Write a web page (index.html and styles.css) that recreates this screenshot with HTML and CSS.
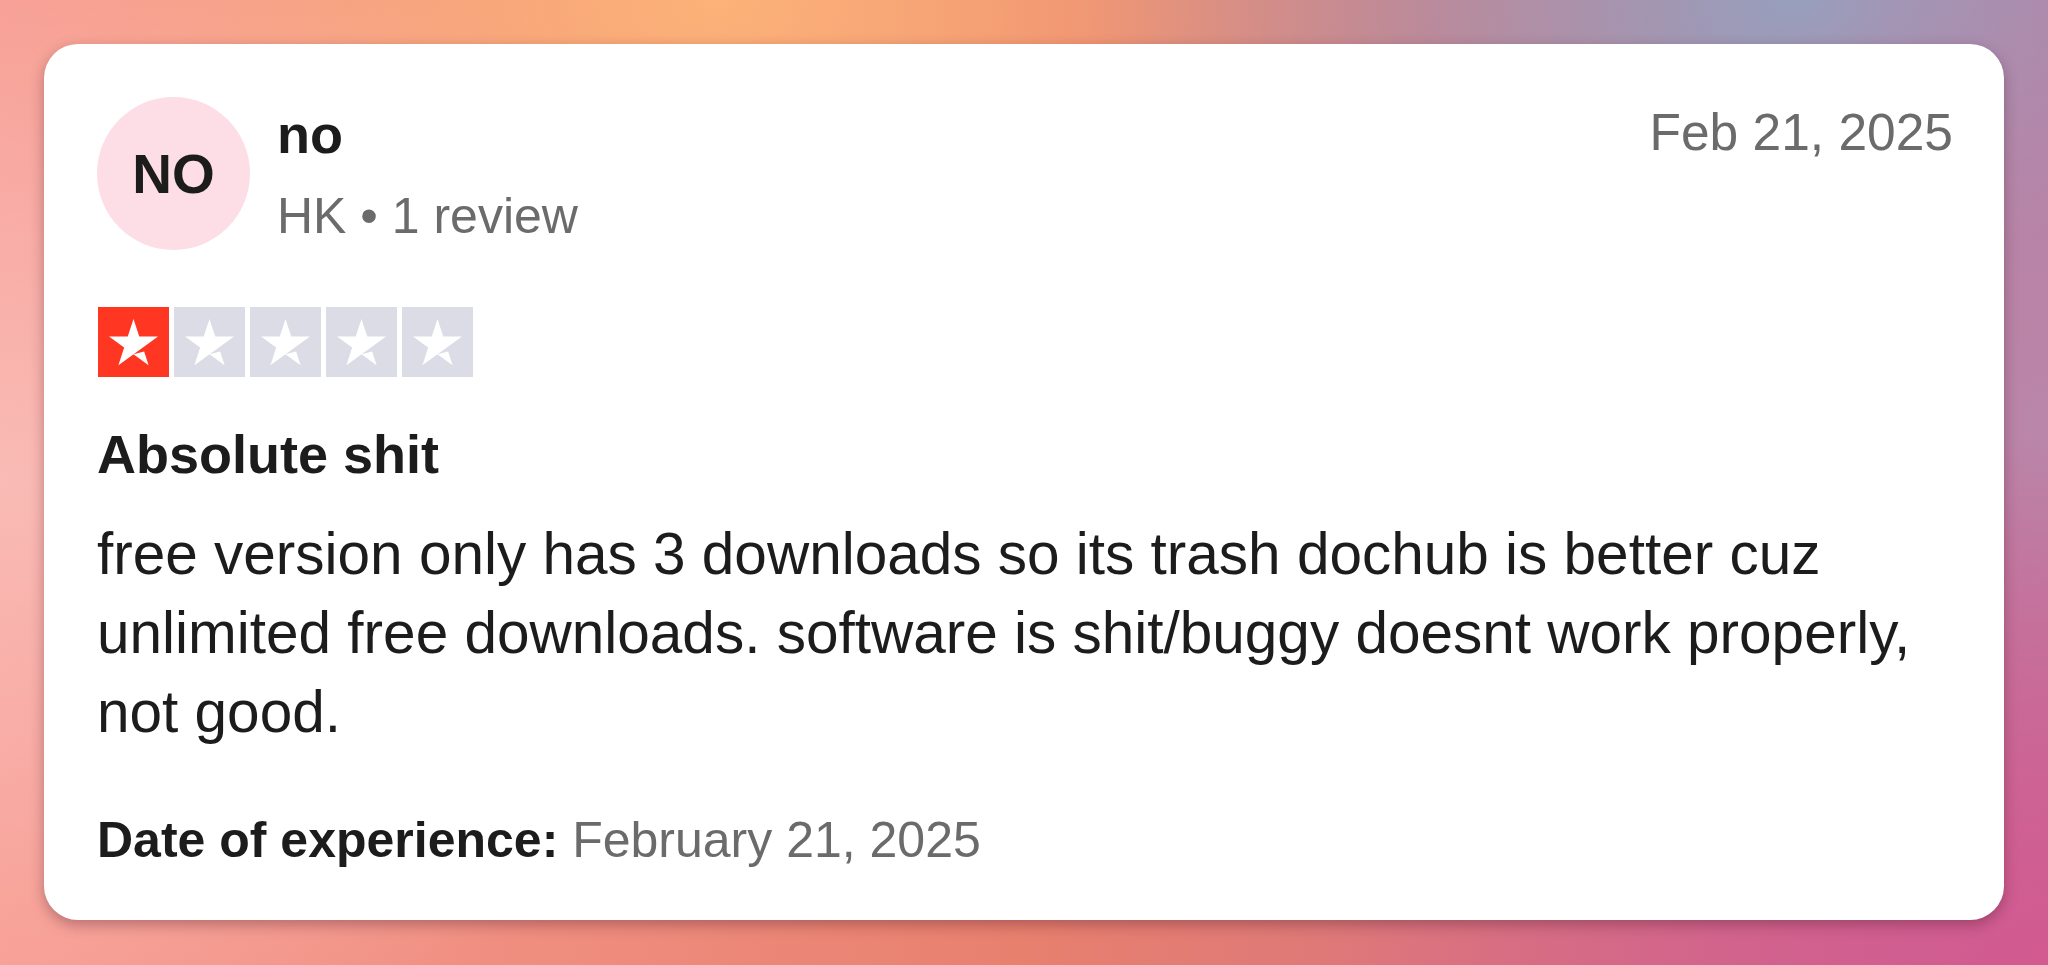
FILE: index.html
```html
<!DOCTYPE html>
<html lang="en">
<head>
    <meta charset="UTF-8">
    <meta name="viewport" content="width=device-width, initial-scale=1.0">
    <title>Review</title>
    <link rel="stylesheet" href="styles.css">
</head>
<body>
    <div class="card">
        <div class="header">
            <div class="avatar">NO</div>
            <div class="user">
                <div class="name">no</div>
                <div class="meta">HK &bull; 1 review</div>
            </div>
            <div class="date">Feb 21, 2025</div>
        </div>

        <div class="stars">
            <div class="star star-on">
                <svg viewBox="0 0 46 46"><path fill="#fff" d="M23 31.077l6.995-1.773 2.923 9.008L23 31.077zm16.1-11.643H26.786L23 7.846l-3.786 11.588H6.9l9.966 7.182-3.785 11.588 9.965-7.182 6.133-4.406L39.1 19.434z"/></svg>
            </div>
            <div class="star">
                <svg viewBox="0 0 46 46"><path fill="#fff" d="M23 31.077l6.995-1.773 2.923 9.008L23 31.077zm16.1-11.643H26.786L23 7.846l-3.786 11.588H6.9l9.966 7.182-3.785 11.588 9.965-7.182 6.133-4.406L39.1 19.434z"/></svg>
            </div>
            <div class="star">
                <svg viewBox="0 0 46 46"><path fill="#fff" d="M23 31.077l6.995-1.773 2.923 9.008L23 31.077zm16.1-11.643H26.786L23 7.846l-3.786 11.588H6.9l9.966 7.182-3.785 11.588 9.965-7.182 6.133-4.406L39.1 19.434z"/></svg>
            </div>
            <div class="star">
                <svg viewBox="0 0 46 46"><path fill="#fff" d="M23 31.077l6.995-1.773 2.923 9.008L23 31.077zm16.1-11.643H26.786L23 7.846l-3.786 11.588H6.9l9.966 7.182-3.785 11.588 9.965-7.182 6.133-4.406L39.1 19.434z"/></svg>
            </div>
            <div class="star">
                <svg viewBox="0 0 46 46"><path fill="#fff" d="M23 31.077l6.995-1.773 2.923 9.008L23 31.077zm16.1-11.643H26.786L23 7.846l-3.786 11.588H6.9l9.966 7.182-3.785 11.588 9.965-7.182 6.133-4.406L39.1 19.434z"/></svg>
            </div>
        </div>

        <h2 class="title">Absolute shit</h2>
        <p class="text">free version only has 3 downloads so its trash dochub is better cuz unlimited free downloads. software is shit/buggy doesnt work properly, not good.</p>

        <p class="experience"><b>Date of experience:</b> February 21, 2025</p>
    </div>
</body>
</html>
```

FILE: styles.css
```css
html, body {
    margin: 0;
    height: 100%;
}

body {
    font-family: "Liberation Sans", Arial, sans-serif;
    color: #1c1c1c;
    overflow: hidden;
    background-color: #f0a090;
    background-image:
        radial-gradient(ellipse 40% 60% at 0% 50%, rgba(250, 190, 185, 0.9), rgba(250, 190, 185, 0) 100%),
        radial-gradient(ellipse 35% 55% at 100% 100%, rgba(210, 90, 145, 1), rgba(210, 90, 145, 0) 100%),
        radial-gradient(ellipse 20% 60% at 100% 45%, rgba(185, 135, 170, 1), rgba(185, 135, 170, 0) 100%),
        radial-gradient(ellipse 35% 50% at 88% 0%, rgba(150, 160, 190, 1), rgba(150, 160, 190, 0) 100%),
        radial-gradient(ellipse 35% 50% at 35% 0%, rgba(252, 178, 120, 1), rgba(252, 178, 120, 0) 100%),
        linear-gradient(90deg, #f79c92 0%, #e8806e 50%, #c86890 100%);
}

.card {
    margin: 44px;
    padding: 53px 51px 48px 53px;
    background: #ffffff;
    border-radius: 34px;
    box-shadow: 0 5px 14px rgba(70, 20, 40, 0.35);
}

.header {
    display: flex;
    align-items: flex-start;
}

.avatar {
    width: 153px;
    height: 153px;
    border-radius: 50%;
    background-color: #fddde6;
    display: flex;
    align-items: center;
    justify-content: center;
    font-size: 55px;
    font-weight: bold;
    flex-shrink: 0;
}

.user {
    margin-left: 27px;
    flex: 1;
}

.name {
    font-size: 54px;
    font-weight: bold;
    line-height: 75px;
}

.meta {
    font-size: 50px;
    line-height: 64px;
    margin-top: 12px;
    color: #6b6b6b;
}

.date {
    font-size: 51.5px;
    line-height: 70px;
    color: #6b6b6b;
}

.stars {
    display: flex;
    gap: 5px;
    margin-top: 57px;
    margin-left: 1px;
}

.star {
    width: 71px;
    height: 70px;
    background-color: #dcdce6;
}

.star-on {
    background-color: #ff3722;
}

.star svg {
    display: block;
    width: 100%;
    height: 100%;
}

.title {
    margin: 44px 0 0 0;
    font-size: 54px;
    line-height: 66px;
    font-weight: bold;
}

.text {
    margin: 27px 0 0 0;
    font-size: 58.5px;
    line-height: 79px;
}

.experience {
    margin: 57px 0 0 0;
    font-size: 50px;
    line-height: 64px;
    color: #6b6b6b;
}

.experience b {
    color: #1c1c1c;
}
```
